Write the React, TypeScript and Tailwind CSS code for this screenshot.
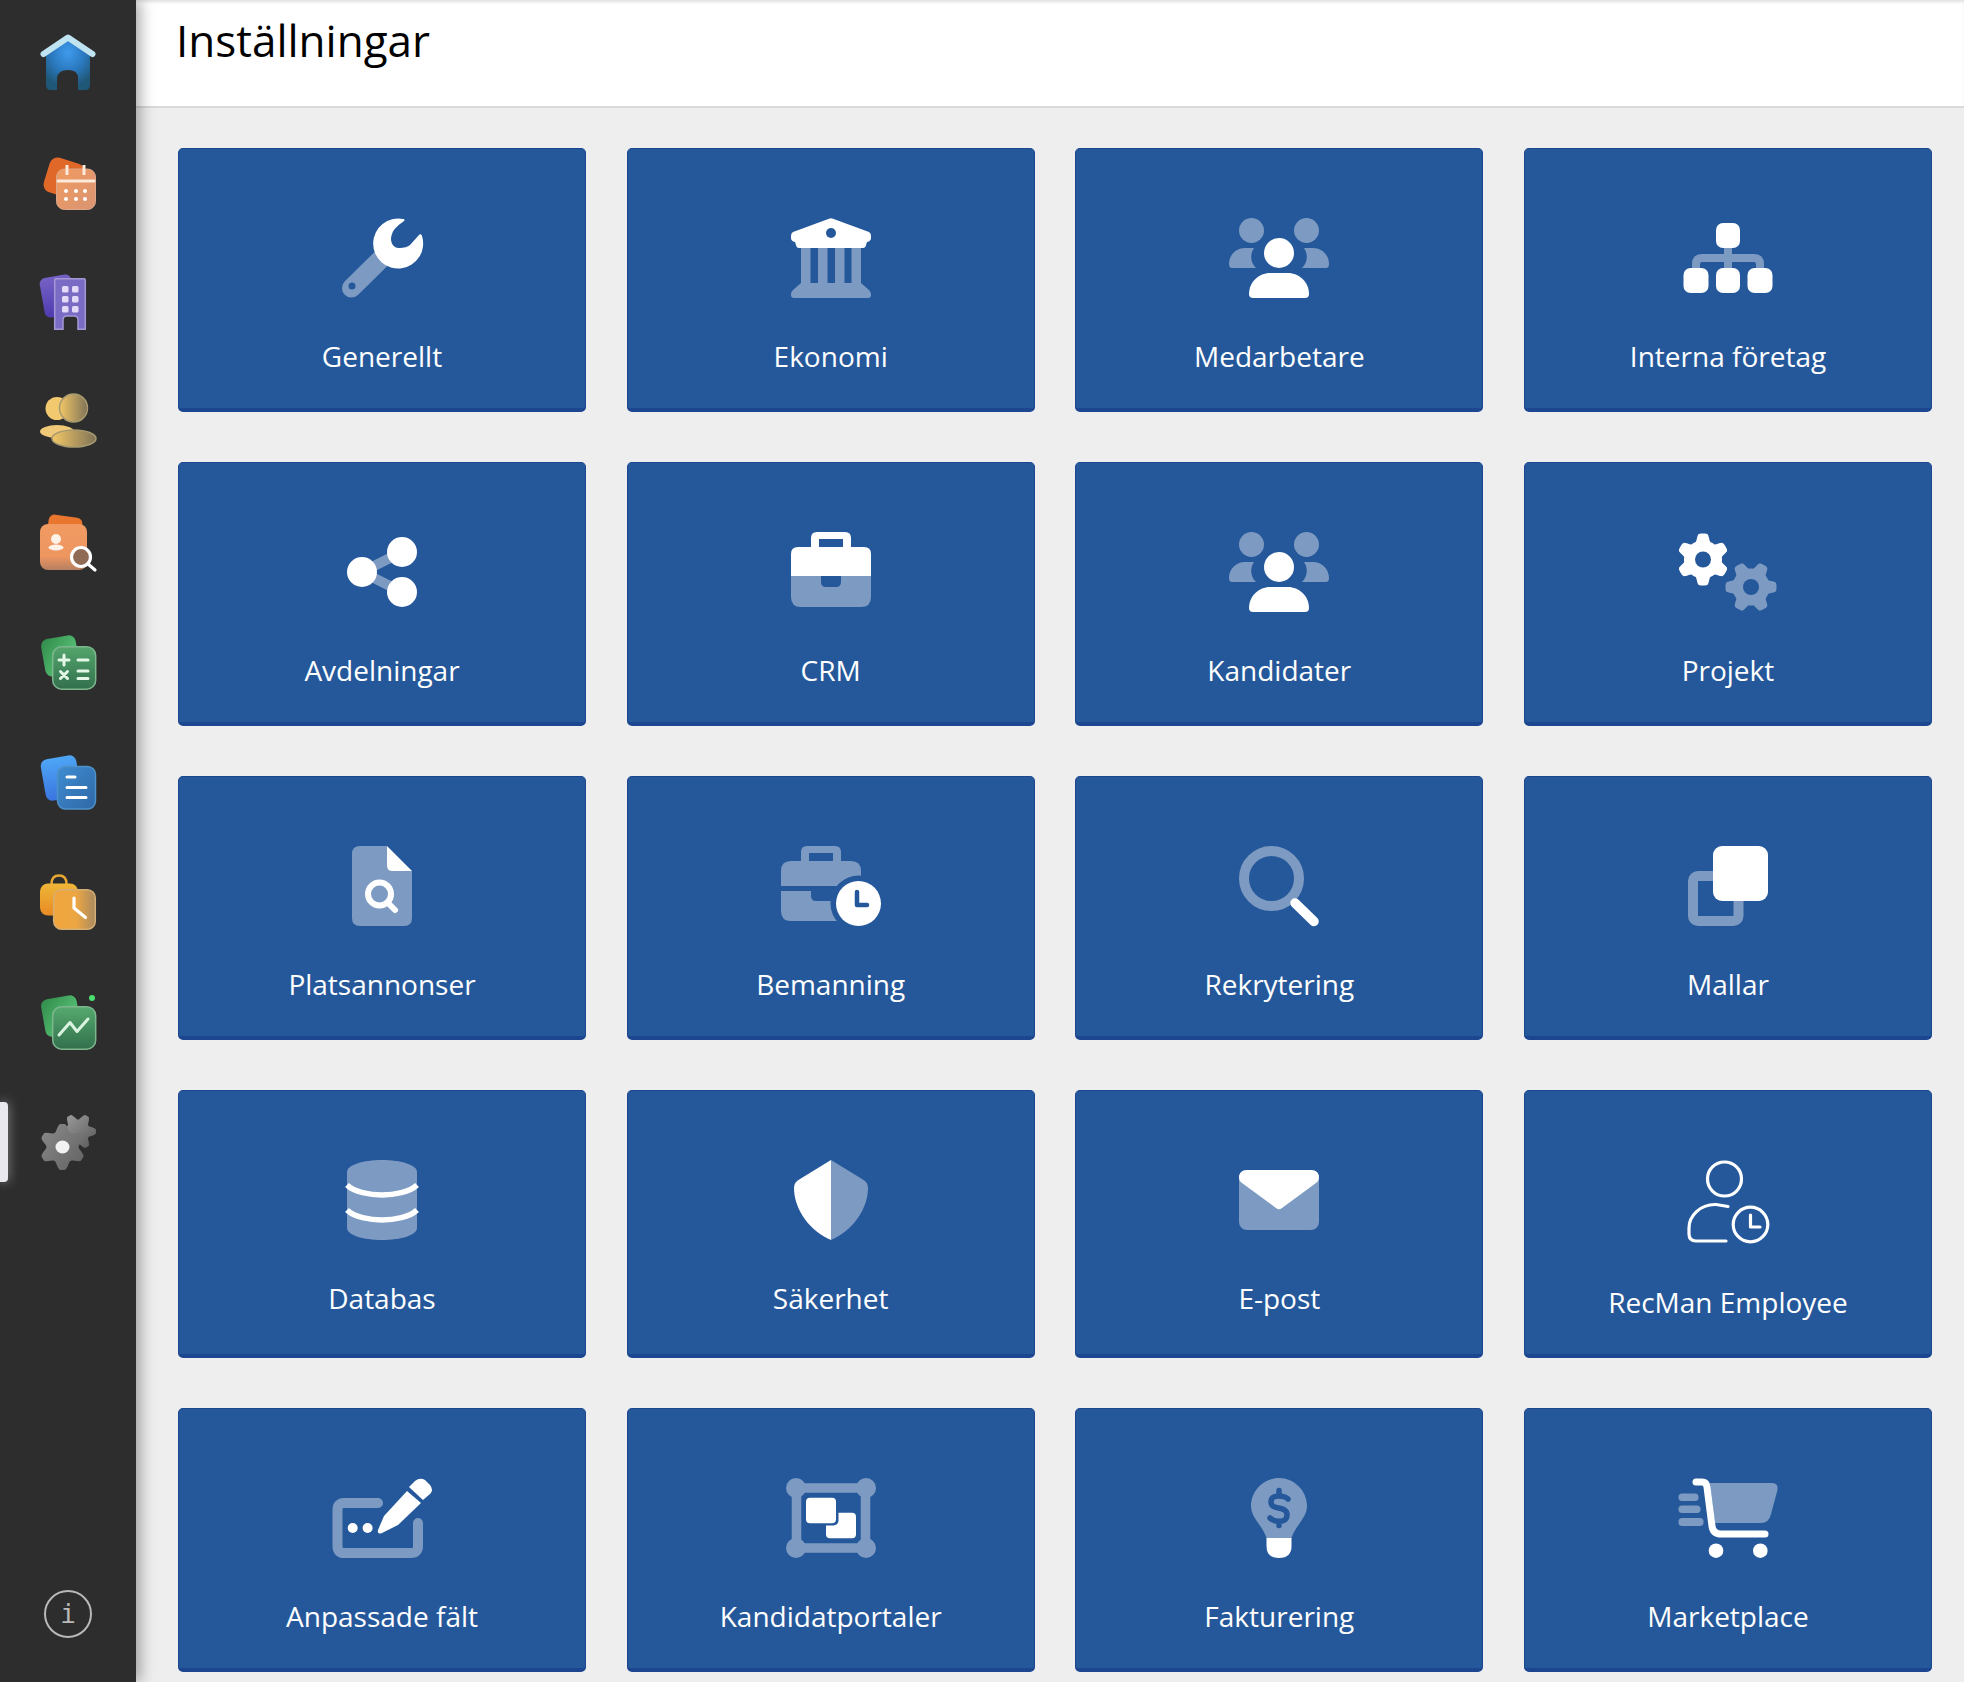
import type { ReactNode } from "react"

const L = "#7d9bc2" // light half of the duotone icons
const W = "#ffffff"
const C = "#25589a" // card blue, used for cut-outs

// rounded cog outline, used by the settings gears
function gearPath(cx: number, cy: number, R: number, amp: number, teeth: number, rot = 0, sharp = 1.9) {
  const pts: string[] = []
  const steps = teeth * 16
  for (let i = 0; i < steps; i++) {
    const t = (i / steps) * Math.PI * 2
    const wave = Math.max(-1, Math.min(1, Math.cos(teeth * (t - rot)) * sharp + 0.1))
    const r = R - amp + amp * wave
    pts.push(`${(cx + r * Math.sin(t)).toFixed(2)} ${(cy - r * Math.cos(t)).toFixed(2)}`)
  }
  return "M" + pts.join("L") + "Z"
}

const users = (
  <>
    <circle cx="22.5" cy="12.5" r="12.5" fill={L} />
    <circle cx="77.5" cy="12.5" r="12.5" fill={L} />
    <path fill={L} d="M0 46C0 37 7 30 16 30H25C21 36 21 44 27 50H3Q0 50 0 46Z" />
    <path fill={L} d="M100 46C100 37 93 30 84 30H75C79 36 79 44 73 50H97Q100 50 100 46Z" />
    <circle cx="50" cy="35" r="15" fill={W} />
    <path fill={W} d="M20 76C20 64 30 55 41 55H59C70 55 80 64 80 76Q80 80 76 80H24Q20 80 20 76Z" />
  </>
)

const items: { label: string; icon: ReactNode; tall?: boolean }[] = [
  {
    label: "Generellt",
    icon: (
      <>
        <path stroke={L} strokeWidth="19" strokeLinecap="round" d="M50 40L19.5 70" />
        <circle cx="20" cy="68" r="3.5" fill={C} />
        <path fill={W} d="M71 1A25 25 0 1 0 90 18C89.5 16 88 16 87 17L78 27C75 30 66 31 63 29C59 26 58 21 60 16C62 10 68 6 72 3C73 2 72.5 1 71 1Z" />
      </>
    ),
  },
  {
    label: "Ekonomi",
    icon: (
      <>
        <path fill={L} d="M20 30H29.5V65H20ZM37 30H46.5V65H37ZM54 30H63.5V65H54ZM70.5 30H80V65H70.5Z" />
        <path fill={L} d="M20 65H80L88 72Q90 74 90 76V77Q90 80 87 80H13Q10 80 10 77V76Q10 74 12 72Z" />
        <path fill={W} d="M48 .8Q50 -.4 52 .8L88 14Q90 15 90 18V20Q90 23 86 24L85 27Q84.5 30 82 30H18Q15.5 30 15 27L14 24Q10 23 10 20V18Q10 15 12 14Z" />
        <circle cx="50" cy="15" r="5" fill={C} />
      </>
    ),
  },
  { label: "Medarbetare", icon: users },
  {
    label: "Interna företag",
    icon: (
      <>
        <path fill="none" stroke={L} strokeWidth="8" d="M50 30V50M18 50V46Q18 40 24 40H76Q82 40 82 46V50" />
        <rect x="38" y="5" width="24" height="25" rx="7" fill={W} />
        <rect x="5.5" y="50" width="25" height="25" rx="7" fill={W} />
        <rect x="38" y="50" width="24" height="25" rx="7" fill={W} />
        <rect x="69.5" y="50" width="25" height="25" rx="7" fill={W} />
      </>
    ),
  },
  {
    label: "Avdelningar",
    icon: (
      <>
        <path fill="none" stroke={L} strokeWidth="10" d="M70 20L30 40L70 60" />
        <circle cx="70" cy="20" r="15" fill={W} />
        <circle cx="30" cy="40" r="15" fill={W} />
        <circle cx="70" cy="60" r="15" fill={W} />
      </>
    ),
  },
  {
    label: "CRM",
    icon: (
      <>
        <path fill={W} fillRule="evenodd" d="M36 0H64Q70 0 70 6V15H83Q90 15 90 22V44H10V22Q10 15 17 15H30V6Q30 0 36 0ZM38 7V15H62V7Z" />
        <path fill={L} d="M10 44H40V50Q40 55 45 55H55Q60 55 60 50V44H90V65Q90 75 80 75H20Q10 75 10 65Z" />
      </>
    ),
  },
  { label: "Kandidater", icon: users },
  {
    label: "Projekt",
    icon: (
      <>
        <path fill={L} d={gearPath(73, 55, 25.5, 3.5, 6, Math.PI / 6)} />
        <circle cx="73" cy="55" r="8" fill={C} />
        <path fill={W} d={gearPath(25, 27.5, 26, 3.5, 6)} />
        <circle cx="25" cy="27.5" r="8" fill={C} />
      </>
    ),
  },
  {
    label: "Platsannonser",
    icon: (
      <>
        <path fill={L} d="M28 0H55V20Q55 25 60 25H80V72Q80 80 72 80H28Q20 80 20 72V8Q20 0 28 0Z" />
        <path fill={W} d="M55 0L80 25H60Q55 25 55 20Z" />
        <circle cx="47.5" cy="48" r="11.5" fill="none" stroke={W} strokeWidth="6" />
        <path stroke={W} strokeWidth="6" strokeLinecap="round" d="M56 57L63 64" />
      </>
    ),
  },
  {
    label: "Bemanning",
    icon: (
      <>
        <path fill={L} fillRule="evenodd" d="M26 0H54Q60 0 60 6V15H70Q80 15 80 25V75H10Q0 75 0 65V25Q0 15 10 15H20V6Q20 0 26 0ZM28 7V15H52V7Z" />
        <rect x="0" y="40" width="58" height="5" fill={C} />
        <path fill={C} d="M30 45H52V55H35Q30 55 30 50Z" />
        <circle cx="77.5" cy="57.5" r="28" fill={C} />
        <path fill={C} d="M72 74H90V80H72Z" />
        <circle cx="77.5" cy="57.5" r="22.5" fill={W} />
        <path fill="none" stroke={C} strokeWidth="4.5" strokeLinecap="round" strokeLinejoin="round" d="M76 46V59H86" />
      </>
    ),
  },
  {
    label: "Rekrytering",
    icon: (
      <>
        <circle cx="42.5" cy="32.5" r="27.5" fill="none" stroke={L} strokeWidth="10" />
        <path stroke={W} strokeWidth="9.5" strokeLinecap="round" d="M66 57L85 75.5" />
      </>
    ),
  },
  {
    label: "Mallar",
    icon: (
      <>
        <rect x="15" y="30" width="45.5" height="45" rx="5" fill="none" stroke={L} strokeWidth="10" />
        <rect x="35" y="0" width="55" height="55" rx="9" fill={W} />
      </>
    ),
  },
  {
    label: "Databas",
    icon: (
      <>
        <path fill={L} d="M15 12C15 5 31 0 50 0S85 5 85 12V68C85 75 69 80 50 80S15 75 15 68Z" />
        <path fill="none" stroke={W} strokeWidth="5.5" d="M15 25C22 32 38 35 50 35S78 32 85 25M15 50C22 57 38 60 50 60S78 57 85 50" />
      </>
    ),
  },
  {
    label: "Säkerhet",
    icon: (
      <>
        <path fill={W} d="M50 0V80C30 72 13 50 13 28Q13 22 19 19Z" />
        <path fill={L} d="M50 0V80C70 72 87 50 87 28Q87 22 81 19Z" />
      </>
    ),
  },
  {
    label: "E-post",
    icon: (
      <>
        <rect x="10" y="10" width="80" height="60" rx="8" fill={L} />
        <path fill={W} d="M18 10H82Q90 10 90 18Q90 21 87 23L53 48Q50 50.5 47 48L13 23Q10 21 10 18Q10 10 18 10Z" />
      </>
    ),
  },
  {
    label: "RecMan Employee",
    tall: true,
    icon: (
      <g fill="none" stroke={W} strokeWidth="3.2" strokeLinecap="round" strokeLinejoin="round">
        <circle cx="46.5" cy="19" r="17" />
        <path d="M50 46.5L38 44.5C22 44 11 56 11 68V74Q11 81 18 81H48" />
        <circle cx="72.5" cy="64.5" r="17.3" />
        <path d="M72.5 55V67H82" />
      </g>
    ),
  },
  {
    label: "Anpassade fält",
    icon: (
      <>
        <path fill="none" stroke={L} strokeWidth="10" strokeLinecap="round" d="M46 25H12Q5.5 25 5.5 32V68Q5.5 75 12 75H79Q86 75 86 68V45" />
        <circle cx="20.7" cy="50" r="5" fill={W} />
        <circle cx="35.6" cy="50" r="5" fill={W} />
        <path fill={W} d="M46 52L52 38L75 13L89 25L66 47L50 55Q45 57 46 52Z" />
        <path fill={W} d="M77 9L83 3Q88 -1 93 2L98 7Q102 12 98 16L91 22Z" />
      </>
    ),
  },
  {
    label: "Kandidatportaler",
    icon: (
      <>
        <rect x="15.5" y="10" width="69" height="60" fill="none" stroke={L} strokeWidth="9.5" />
        <circle cx="15" cy="10" r="10" fill={L} />
        <circle cx="85" cy="10" r="10" fill={L} />
        <circle cx="15" cy="70" r="10" fill={L} />
        <circle cx="85" cy="70" r="10" fill={L} />
        <rect x="45" y="34.7" width="30" height="25.5" rx="4" fill={W} />
        <rect x="22.5" y="17.5" width="35" height="30" rx="5" fill={C} />
        <rect x="25" y="19.7" width="30" height="25.6" rx="4" fill={W} />
      </>
    ),
  },
  {
    label: "Fakturering",
    icon: (
      <>
        <path fill={L} d="M50 0C65 0 78 12.5 78 28C78 40 66 48 62.5 60H37.5C34 48 22 40 22 28C22 12.5 35 0 50 0Z" />
        <path fill={W} d="M37.5 60H62.5V68Q62.5 80 50 80Q37.5 80 37.5 68Z" />
        <path fill="none" stroke={C} strokeWidth="5.5" strokeLinecap="round" d="M59 21C56 18 42 15 42 24C42 33 58 27 58 37C58 46 45 44 41 40M50 12.5V17M50 43V47.5" />
      </>
    ),
  },
  {
    label: "Marketplace",
    icon: (
      <>
        <path fill={L} d="M32 5H94Q100.5 5 99.5 12L93 36Q91 45 83 45H37Z" />
        <rect x="0.5" y="15.5" width="20" height="7.5" rx="3.5" fill={L} />
        <rect x="0.5" y="27.5" width="22" height="7.5" rx="3.5" fill={L} />
        <rect x="0.5" y="40" width="25" height="8" rx="3.5" fill={L} />
        <path fill="none" stroke={W} strokeWidth="7" strokeLinecap="round" d="M18 4H24Q28.5 4 29 9L34 48Q35 56 43 56H87" />
        <circle cx="38" cy="72.7" r="7.3" fill={W} />
        <circle cx="82.3" cy="72.7" r="7.3" fill={W} />
      </>
    ),
  },
]

function SettingsCard({ label, icon, tall }: { label: string; icon: ReactNode; tall?: boolean }) {
  return (
    <div className="flex flex-col items-center rounded-[5px] border border-b-4 border-[#1c4790] bg-[#25589a] pt-[69px] pb-[32px]">
      {tall ? (
        <svg width="100" height="84" viewBox="0 0 100 84" className="overflow-visible">
          {icon}
        </svg>
      ) : (
        <svg width="100" height="80" viewBox="0 0 100 80" className="overflow-visible">
          {icon}
        </svg>
      )}
      <div className="mt-[38px] text-[28px] leading-[40px] text-white">{label}</div>
    </div>
  )
}

const railIcons: ReactNode[] = [
  // home
  <>
    <defs>
      <radialGradient id="homeBody" cx="50%" cy="25%" r="70%">
        <stop offset="0%" stopColor="#3f9bee" />
        <stop offset="55%" stopColor="#2a78bd" />
        <stop offset="100%" stopColor="#1f5877" />
      </radialGradient>
    </defs>
    <path fill="url(#homeBody)" d="M6 18L28 6L50 18V51Q50 56 45 56H38V44Q38 36 28 36T17 44V56H11Q6 56 6 51Z" />
    <path fill="none" stroke="#bfe3f1" strokeWidth="6" strokeLinecap="round" strokeLinejoin="round" d="M3.5 20L28 3.5L52.5 20" />
  </>,
  // calendar
  <>
    <defs>
      <linearGradient id="calFront" x1="0" y1="0" x2="1" y2="1">
        <stop offset="0%" stopColor="#f29a60" />
        <stop offset="100%" stopColor="#d99572" />
      </linearGradient>
    </defs>
    <rect x="6" y="6" width="36" height="36" rx="8" fill="#e0692a" transform="rotate(17 24 24)" />
    <rect x="16.5" y="15" width="39" height="40.5" rx="8" fill="url(#calFront)" stroke="#dba68a" />
    <path stroke="#fbe9dc" strokeWidth="3" strokeLinecap="round" d="M18 27H54" />
    <path stroke="#fbe9dc" strokeWidth="3" d="M27 11V21M44 11V21" />
    <g fill="#fff">
      <circle cx="26" cy="37" r="2" />
      <circle cx="36" cy="37" r="2" />
      <circle cx="45" cy="37" r="2" />
      <circle cx="26" cy="45" r="2" />
      <circle cx="36" cy="45" r="2" />
      <circle cx="45" cy="45" r="2" />
    </g>
  </>,
  // building
  <>
    <defs>
      <linearGradient id="bldBack" x1="0" y1="0" x2="0" y2="1">
        <stop offset="0%" stopColor="#7561c4" />
        <stop offset="100%" stopColor="#4f3bb0" />
      </linearGradient>
    </defs>
    <rect x="2" y="2" width="32" height="40" rx="6" fill="url(#bldBack)" transform="rotate(-10 18 22)" />
    <path fill="#7a6cc4" stroke="#a597d4" strokeWidth="1.5" d="M16 4.8H44Q45.3 4.8 45.3 6V55.3H38V46Q38 42 34 42H27Q23 42 23 46V55.3H14.7V6Q14.7 4.8 16 4.8Z" />
    <g fill="#e3daf8">
      <rect x="22" y="12" width="6.5" height="6.5" rx="1.5" />
      <rect x="32" y="12" width="6.5" height="6.5" rx="1.5" />
      <rect x="22" y="22" width="6.5" height="6.5" rx="1.5" />
      <rect x="32" y="22" width="6.5" height="6.5" rx="1.5" />
      <rect x="22" y="32" width="6.5" height="6.5" rx="1.5" />
      <rect x="32" y="32" width="6.5" height="6.5" rx="1.5" />
    </g>
  </>,
  // people
  <>
    <defs>
      <linearGradient id="ppl" x1="0" y1="0" x2="1" y2="0">
        <stop offset="0%" stopColor="#f3c766" />
        <stop offset="100%" stopColor="#7f7357" />
      </linearGradient>
    </defs>
    <circle cx="17" cy="14.5" r="11.5" fill="#f2c96f" />
    <ellipse cx="17" cy="37.5" rx="17" ry="6.5" fill="#efc978" />
    <circle cx="33.5" cy="14" r="14" fill="url(#ppl)" stroke="#a89a70" strokeWidth="1.5" />
    <ellipse cx="34" cy="44.5" rx="22" ry="8.5" fill="url(#ppl)" stroke="#a89a70" strokeWidth="1.5" />
  </>,
  // contact search
  <>
    <defs>
      <linearGradient id="contactFront" x1="0" y1="0" x2="0" y2="1">
        <stop offset="0%" stopColor="#f19a62" />
        <stop offset="70%" stopColor="#ee9660" />
        <stop offset="100%" stopColor="#b57f62" />
      </linearGradient>
    </defs>
    <rect x="7" y="2" width="34" height="34" rx="6" fill="#e8762f" transform="rotate(8 24 19)" />
    <rect x="0" y="10" width="47" height="46" rx="8" fill="url(#contactFront)" />
    <circle cx="16" cy="25" r="5" fill="#fdf1e8" />
    <ellipse cx="16" cy="33.5" rx="7.5" ry="3" fill="#fdf1e8" />
    <circle cx="41" cy="43" r="9.5" fill="#8f6a55" stroke="#fff" strokeWidth="3.2" />
    <path stroke="#fff" strokeWidth="3.2" strokeLinecap="round" d="M48 50L55 56" />
  </>,
  // calculator
  <>
    <defs>
      <linearGradient id="calcBack" x1="0" y1="0" x2="1" y2="1">
        <stop offset="0%" stopColor="#2f8a49" />
        <stop offset="100%" stopColor="#66d586" />
      </linearGradient>
      <linearGradient id="calcFront" x1="0" y1="0" x2="0" y2="1">
        <stop offset="0%" stopColor="#54a56c" />
        <stop offset="100%" stopColor="#33704d" />
      </linearGradient>
    </defs>
    <rect x="3" y="3" width="35" height="38" rx="7" fill="url(#calcBack)" transform="rotate(-10 20 22)" />
    <rect x="12.7" y="12.7" width="43" height="42.5" rx="9" fill="url(#calcFront)" stroke="#7eb78e" strokeWidth="1.5" />
    <path fill="none" stroke="#e4f7e7" strokeWidth="3" strokeLinecap="round" d="M24 21V31M19 26H29M38 26H48M38 37H48M38 44.5H48M20.5 37.5L27.5 44.5M27.5 37.5L20.5 44.5" />
  </>,
  // document
  <>
    <defs>
      <linearGradient id="docBack" x1="0" y1="0" x2="0" y2="1">
        <stop offset="0%" stopColor="#4ea6f6" />
        <stop offset="100%" stopColor="#3a74df" />
      </linearGradient>
      <linearGradient id="docFront" x1="0" y1="0" x2="1" y2="1">
        <stop offset="0%" stopColor="#3f8cd2" />
        <stop offset="100%" stopColor="#2f68a6" />
      </linearGradient>
    </defs>
    <rect x="3" y="3" width="36" height="42" rx="7" fill="url(#docBack)" transform="rotate(-10 21 24)" />
    <rect x="17.5" y="12.5" width="38" height="42.5" rx="8" fill="url(#docFront)" stroke="#4d93c9" strokeWidth="1.5" />
    <path stroke="#fff" strokeWidth="3" strokeLinecap="round" d="M27 23H35M27 33.5H46M27 43.5H46" />
  </>,
  // bag and clock
  <>
    <defs>
      <linearGradient id="bagBack" x1="0" y1="0" x2="0" y2="1">
        <stop offset="0%" stopColor="#efb638" />
        <stop offset="100%" stopColor="#e88a24" />
      </linearGradient>
      <linearGradient id="bagFront" x1="0" y1="0" x2="1" y2="0">
        <stop offset="0%" stopColor="#f2a63c" />
        <stop offset="55%" stopColor="#eba643" />
        <stop offset="100%" stopColor="#a98a60" />
      </linearGradient>
    </defs>
    <path fill="none" stroke="#e8a733" strokeWidth="2.5" d="M11.5 12V10Q11.5 1.5 19 1.5T26.5 10V12" />
    <rect x="0" y="9.5" width="38" height="32" rx="8" fill="url(#bagBack)" />
    <rect x="13.7" y="15.7" width="41.6" height="39.6" rx="8" fill="url(#bagFront)" stroke="#d6ad73" strokeWidth="1.5" />
    <path fill="none" stroke="#fff" strokeWidth="3.2" strokeLinecap="round" strokeLinejoin="round" d="M34 24V34L45.5 43.5" />
  </>,
  // chart
  <>
    <defs>
      <linearGradient id="chartFront" x1="0" y1="0" x2="0" y2="1">
        <stop offset="0%" stopColor="#55a96f" />
        <stop offset="100%" stopColor="#33704d" />
      </linearGradient>
    </defs>
    <rect x="3" y="3" width="36" height="38" rx="7" fill="url(#calcBack)" transform="rotate(-10 21 22)" />
    <rect x="12.7" y="12.7" width="43" height="42.5" rx="9" fill="url(#chartFront)" stroke="#7eb78e" strokeWidth="1.5" />
    <path fill="none" stroke="#d9f3de" strokeWidth="3" strokeLinecap="round" strokeLinejoin="round" d="M19 41L30 28.5L37 37.5L48 25" />
    <circle cx="52" cy="4" r="3" fill="#4ade6e" />
  </>,
  // settings gears
  <>
    <defs>
      <linearGradient id="gearFront" x1="0" y1="0" x2="1" y2="1">
        <stop offset="0%" stopColor="#8a8a8a" />
        <stop offset="100%" stopColor="#626262" />
      </linearGradient>
      <linearGradient id="gearBack" x1="0" y1="0" x2="1" y2="1">
        <stop offset="0%" stopColor="#a0a0a0" />
        <stop offset="100%" stopColor="#585858" />
      </linearGradient>
    </defs>
    <path fill="url(#gearBack)" d={gearPath(38, 17.5, 18, 3, 6, Math.PI / 6, 1.2)} />
    <path fill="url(#gearFront)" d={gearPath(22.5, 33, 23, 3.4, 6, 0, 1.2)} />
    <ellipse cx="22.5" cy="33" rx="7" ry="6.5" fill="#f2f2f2" />
  </>,
]

export default function App() {
  return (
    <div className="flex min-h-screen bg-[#eeeeee] font-['Open_Sans',sans-serif]">
      <aside className="relative z-10 flex w-[136px] shrink-0 flex-col items-center bg-[#2d2d2d] pt-[34px] pb-[44px] shadow-[4px_0_14px_rgba(0,0,0,0.35)]">
        <nav className="flex flex-col gap-[64px]">
          {railIcons.map((icon, i) => (
            <svg key={i} width="56" height="56" viewBox="0 0 56 56" className="overflow-visible">
              {icon}
            </svg>
          ))}
        </nav>
        {/* active marker beside the settings entry */}
        <div className="absolute left-0 top-[1102px] h-[80px] w-[8px] rounded-r-[4px] bg-[#e8e8ee] shadow-[0_0_12px_rgba(255,255,255,0.45)]" />
        <div className="mt-auto flex h-[48px] w-[48px] items-center justify-center rounded-full border-2 border-[#b8b8b8] font-['DejaVu_Sans_Mono',monospace] text-[26px] leading-none text-[#b8b8b8]">
          i
        </div>
      </aside>
      <main className="min-w-0 flex-1">
        <header className="h-[108px] border-b-2 border-[#d9d9d9] bg-white pt-[10px] pl-[40px] shadow-[inset_0_3px_3px_-1px_rgba(0,0,0,0.12)]">
          <h1 className="text-[44px] leading-[60px] font-normal text-black">Inställningar</h1>
        </header>
        <section className="grid grid-cols-4 gap-x-[40.67px] gap-y-[50px] pt-[40px] pr-[32px] pb-[10px] pl-[42px]">
          {items.map((item) => (
            <SettingsCard key={item.label} {...item} />
          ))}
        </section>
      </main>
    </div>
  )
}
